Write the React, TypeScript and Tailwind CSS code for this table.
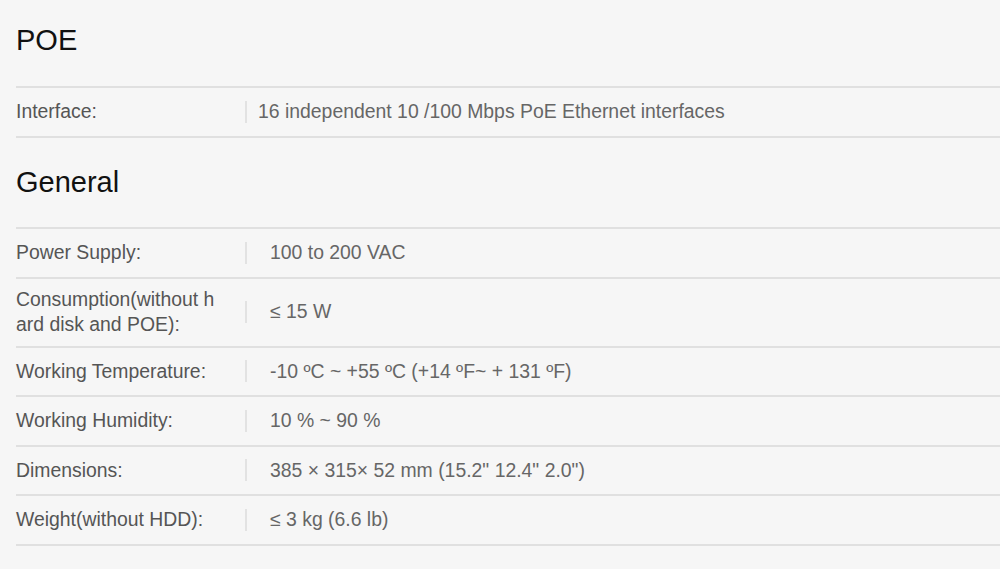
type Spec = { label: string; value: string };

const POE: Spec[] = [
  { label: "Interface:", value: "16 independent 10 /100 Mbps PoE Ethernet interfaces" },
];

const GENERAL: Spec[] = [
  { label: "Power Supply:", value: "100 to 200 VAC" },
  { label: "Consumption(without hard disk and POE):", value: "≤ 15 W" },
  { label: "Working Temperature:", value: "-10 ºC ~ +55 ºC (+14 ºF~ + 131 ºF)" },
  { label: "Working Humidity:", value: "10 % ~ 90 %" },
  { label: "Dimensions:", value: '385 × 315× 52 mm (15.2" 12.4" 2.0")' },
  { label: "Weight(without HDD):", value: "≤ 3 kg (6.6 lb)" },
];

function SpecTable({ rows, tight }: { rows: Spec[]; tight?: boolean }) {
  return (
    <div className="border-t-2 border-[#e0e0e0]">
      {rows.map((r) => (
        <div
          key={r.label}
          className="flex min-h-[49.5px] items-center border-b-2 border-[#e0e0e0] py-2 leading-[25.5px]"
        >
          <div className="w-[229px] shrink-0">
            <div className="w-[201px] break-all text-[#555]">{r.label}</div>
          </div>
          <span className="h-[22px] w-[2px] shrink-0 bg-[#e2e2e2]" />
          <div className={tight ? "pl-[11px] text-[#666]" : "pl-[23px] text-[#666]"}>{r.value}</div>
        </div>
      ))}
    </div>
  );
}

export default function App() {
  return (
    <div
      className="min-h-screen bg-[#f6f6f6] pl-4 pt-[26px] text-[19.4px]"
      style={{ fontFamily: '"Liberation Sans", Arial, sans-serif' }}
    >
      <h2 className="mb-[31px] text-[29px] leading-[29px] text-[#111]">POE</h2>
      <SpecTable rows={POE} tight />

      <h2 className="mb-[30.5px] mt-[30px] text-[29px] leading-[29px] text-[#111]">General</h2>
      <SpecTable rows={GENERAL} />
    </div>
  );
}
